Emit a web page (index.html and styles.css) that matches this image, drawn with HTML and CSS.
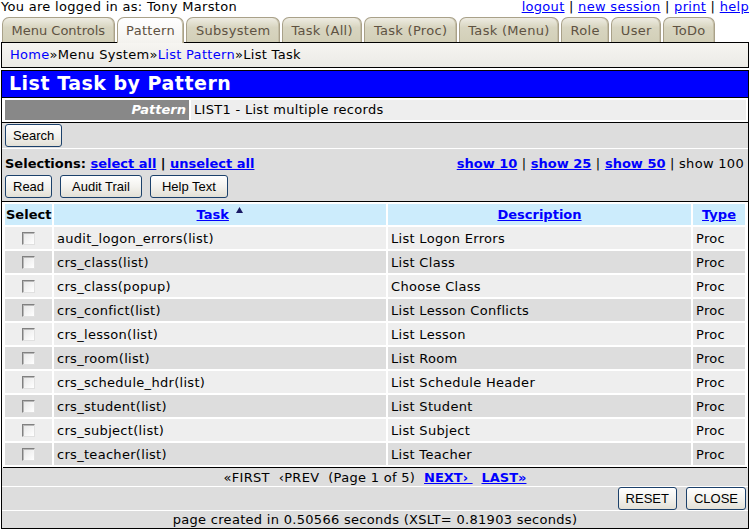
FILE: index.html
```html
<!DOCTYPE html>
<html lang="en">

<head>
    <meta charset="UTF-8">
    <title>List Task by Pattern</title>
    <link rel="stylesheet" href="styles.css">
</head>

<body>
    <div class="top-bar">
        <span>You are logged in as: Tony Marston</span>
        <span class="top-links">
            <a href="#">logout</a> | <a href="#">new session</a> | <a href="#">print</a> | <a href="#">help</a>
        </span>
    </div>

    <ul class="tabs">
        <li class="tab">Menu Controls</li>
        <li class="tab active">Pattern</li>
        <li class="tab">Subsystem</li>
        <li class="tab">Task (All)</li>
        <li class="tab">Task (Proc)</li>
        <li class="tab">Task (Menu)</li>
        <li class="tab">Role</li>
        <li class="tab">User</li>
        <li class="tab">ToDo</li>
    </ul>

    <div class="breadcrumbs">
        <a href="#">Home</a>»Menu System»<a href="#">List Pattern</a>»List Task
    </div>

    <div class="main">
        <h1 class="title">List Task by Pattern</h1>

        <div class="outer-row">
            <div class="outer-label">Pattern</div>
            <div class="outer-value">LIST1 - List multiple records</div>
        </div>

        <div class="actions">
            <div class="search-bar">
                <button type="button" class="btn">Search</button>
            </div>
            <div class="selections">
                <div><b>Selections:</b> <a href="#">select all</a> <b>|</b> <a href="#">unselect all</a></div>
                <div class="page-size">
                    <a href="#">show 10</a> | <a href="#">show 25</a> | <a href="#">show 50</a> | show 100
                </div>
            </div>
            <div class="button-row">
                <button type="button" class="btn">Read</button>
                <button type="button" class="btn wide">Audit Trail</button>
                <button type="button" class="btn wide">Help Text</button>
            </div>
        </div>

        <table class="data">
            <colgroup>
                <col class="col-select">
                <col class="col-task">
                <col class="col-desc">
                <col>
            </colgroup>
            <thead>
                <tr>
                    <th class="head-select">Select</th>
                    <th><a href="#">Task</a>
                        <svg class="sort" width="7" height="6" viewBox="0 0 7 6"><path d="M3.5 0L7 6H0z" fill="#1a1a66"/></svg>
                    </th>
                    <th><a href="#">Description</a></th>
                    <th><a href="#">Type</a></th>
                </tr>
            </thead>
            <tbody id="rows"></tbody>
        </table>

        <div class="pager">
            «FIRST &nbsp;‹PREV &nbsp;(Page 1 of 5) &nbsp;<a href="#">NEXT› </a>&nbsp; <a href="#">LAST»</a>
        </div>
        <div class="form-buttons">
            <button type="button" class="btn">RESET</button>
            <button type="button" class="btn">CLOSE</button>
        </div>
        <div class="timing">page created in 0.50566 seconds (XSLT= 0.81903 seconds)</div>
    </div>

    <script>
        const tasks = [
            ['audit_logon_errors(list)', 'List Logon Errors'],
            ['crs_class(list)', 'List Class'],
            ['crs_class(popup)', 'Choose Class'],
            ['crs_confict(list)', 'List Lesson Conflicts'],
            ['crs_lesson(list)', 'List Lesson'],
            ['crs_room(list)', 'List Room'],
            ['crs_schedule_hdr(list)', 'List Schedule Header'],
            ['crs_student(list)', 'List Student'],
            ['crs_subject(list)', 'List Subject'],
            ['crs_teacher(list)', 'List Teacher']
        ];

        const tbody = document.getElementById('rows');
        tasks.forEach((t, i) => {
            const tr = document.createElement('tr');
            tr.className = i % 2 ? 'even' : 'odd';
            tr.innerHTML = '<td class="cell-select"><input type="checkbox" class="check"></td>' +
                '<td>' + t[0] + '</td><td>' + t[1] + '</td><td>Proc</td>';
            tbody.appendChild(tr);
        });
    </script>
</body>

</html>
```

FILE: styles.css
```css
/* Basic reset */
* {
    margin: 0;
    padding: 0;
    box-sizing: border-box;
}

body {
    font-family: 'DejaVu Sans', Verdana, sans-serif;
    font-size: 13px;
    letter-spacing: 0.3px;
    color: #000000;
    background-color: #ffffff;
    padding: 0 3px 0 1px;
}

a {
    color: #0000ff;
}

b,
th,
.selections a,
.page-size a,
.pager a {
    letter-spacing: 0;
}

.top-bar {
    display: flex;
    justify-content: space-between;
    height: 16px;
    line-height: 14px;
}

/* Tabs */
.tabs {
    display: flex;
    gap: 2px;
    list-style: none;
    padding-left: 1px;
    margin-top: 1px;
    position: relative;
    z-index: 1;
}

.tab {
    height: 25px;
    line-height: 25px;
    padding: 0 8.5px;
    color: #5e5242;
    border: 1px solid #a9a189;
    border-bottom: none;
    border-radius: 7px 7px 0 0;
    background: linear-gradient(#eeece2, #d8d5c0 40%, #d2cfb8);
    box-shadow: inset -1px 0 0 #c4bea6;
}

.tab:first-child {
    letter-spacing: 0;
}

.tab.active {
    background: linear-gradient(#ffffff, #f3f2ee);
    height: 26px;
    margin-bottom: -1px;
}

.breadcrumbs {
    height: 26px;
    line-height: 24px;
    padding-left: 8px;
    border: 1px solid #000000;
    background: linear-gradient(#f6f5f1, #ebeae6);
}

.breadcrumbs a {
    text-decoration: none;
}

/* Main block */
.main {
    border: 1px solid #000000;
    border-top: none;
}

.title {
    margin-top: 2px;
    height: 28px;
    line-height: 25px;
    padding-left: 7px;
    font-size: 19px;
    font-weight: bold;
    letter-spacing: 0.5px;
    color: #ffffff;
    background-color: #0000ff;
    border-top: 1px solid #000000;
    border-bottom: 1px solid #000000;
}

.outer-row {
    display: flex;
    gap: 2px;
    padding: 2px 2px 2px 3px;
    height: 24px;
}

.outer-label {
    width: 184px;
    background-color: #888888;
    color: #ffffff;
    font-style: italic;
    font-weight: bold;
    letter-spacing: 0;
    text-align: right;
    padding-right: 3px;
    line-height: 20px;
}

.outer-value {
    flex: 1;
    background-color: #eeeeee;
    padding-left: 3px;
    line-height: 20px;
}

.actions {
    border-top: 1px solid #000000;
    border-bottom: 1px solid #000000;
    background-color: #dddddd;
}

.search-bar {
    padding: 1px 2px 2px 3px;
    height: 26px;
    border-bottom: 1px solid #ffffff;
}

.selections {
    display: flex;
    justify-content: space-between;
    height: 26px;
    padding: 8px 4px 0 3px;
    line-height: 14px;
}

.selections a,
.page-size a {
    font-weight: bold;
}

.button-row {
    display: flex;
    gap: 8px;
    padding: 0 3px 2px 3px;
    height: 26px;
}

.btn {
    font-family: 'Liberation Sans', Arial, sans-serif;
    font-size: 13px;
    letter-spacing: 0;
    height: 23px;
    padding: 0 7px;
    color: #000000;
    border: 1px solid #1c416b;
    border-radius: 3px;
    background: linear-gradient(#ffffff, #f3f2ee 50%, #e3e0d6);
}

.btn.wide {
    padding: 0 11px;
}

/* Data table */
.data {
    width: calc(100% - 2px);
    margin-left: 1px;
    table-layout: fixed;
    border-spacing: 2px;
    border-bottom: 1px solid #000000;
}

.col-select {
    width: 47px;
}

.col-task {
    width: 332px;
}

.col-desc {
    width: 303px;
}

.data th {
    height: 21px;
    background-color: #ccecfc;
    font-weight: bold;
    padding: 0 1px;
}

.data th.head-select {
    text-align: left;
}

.sort {
    vertical-align: 6px;
    margin-left: 3px;
}

.data td {
    height: 22px;
    padding: 0 3px;
}

.data td.cell-select {
    text-align: center;
}

.data tr.odd td {
    background-color: #eeeeee;
}

.data tr.even td {
    background-color: #dddddd;
}

.check {
    appearance: none;
    width: 13px;
    height: 13px;
    vertical-align: -2px;
    border: 1px solid;
    border-color: #808080 #e0e0e0 #e0e0e0 #808080;
    background: linear-gradient(135deg, #e6e6e6, #ffffff);
    box-shadow: inset 1px 1px 0 #b8b8b8;
}

.pager {
    height: 19px;
    line-height: 19px;
    text-align: center;
    background-color: #dddddd;
    border-bottom: 1px solid #ffffff;
}

.pager a {
    font-weight: bold;
}

.form-buttons {
    display: flex;
    justify-content: flex-end;
    gap: 9px;
    height: 24px;
    padding: 0 2px 0 0;
    background-color: #dddddd;
    border-bottom: 1px solid #ffffff;
}

.timing {
    height: 17px;
    line-height: 17px;
    text-align: center;
    background-color: #dddddd;
}
```
